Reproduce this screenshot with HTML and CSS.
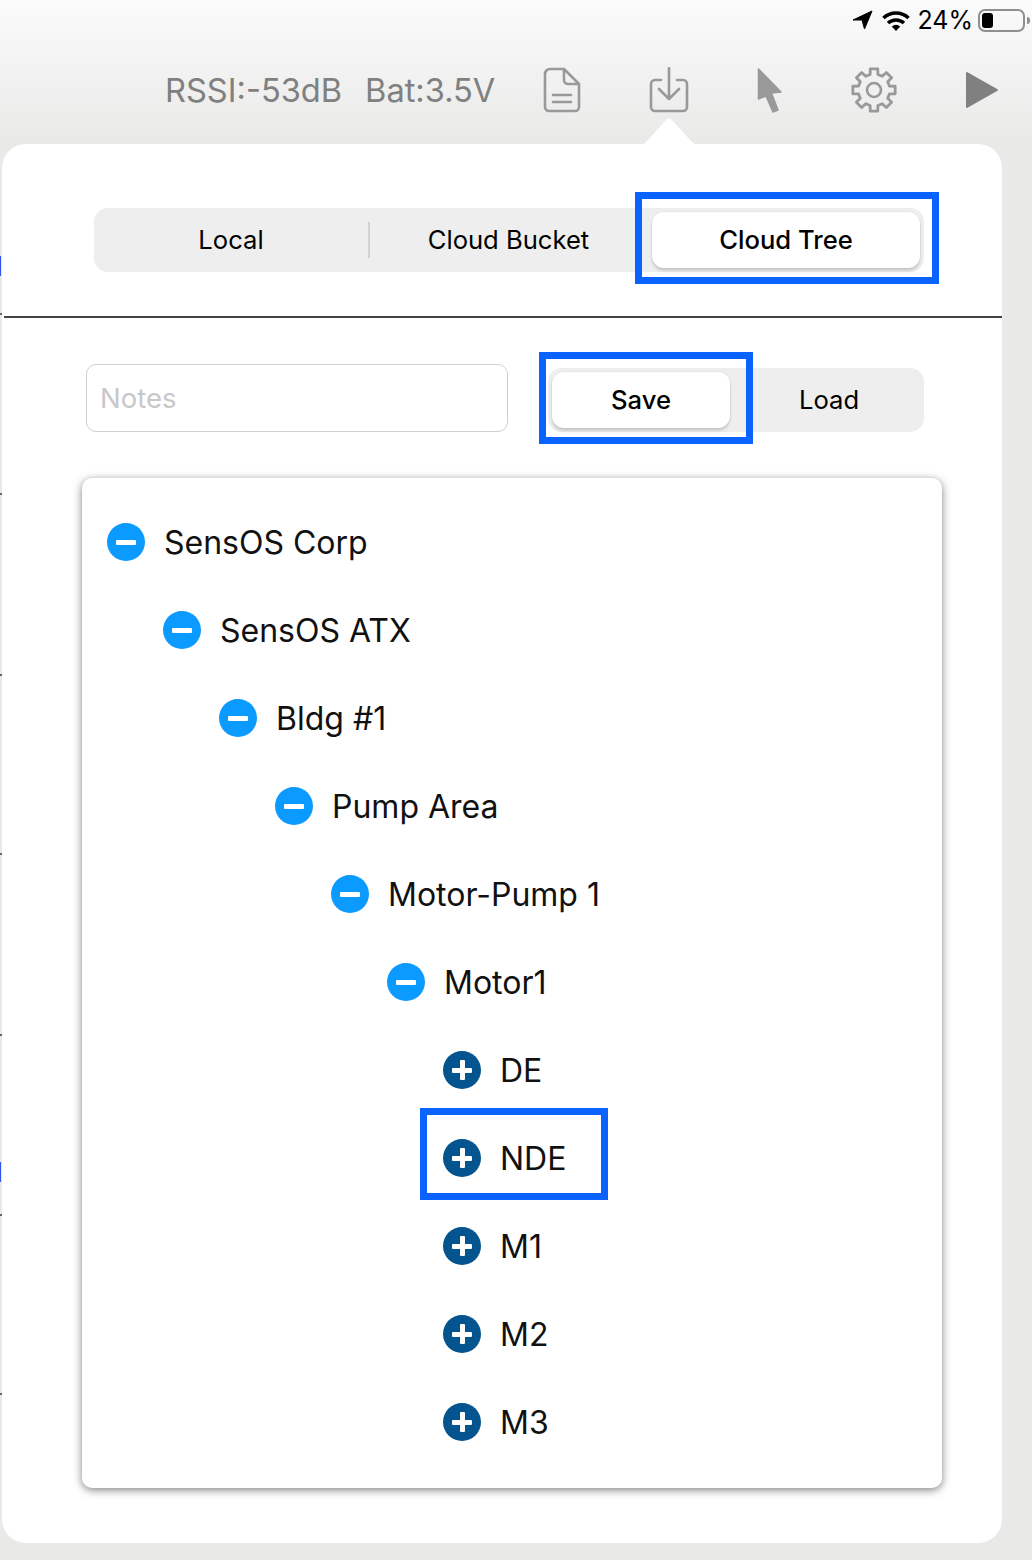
FILE: index.html
```html
<!DOCTYPE html>
<html lang="en">
<head>
<meta charset="utf-8">
<title>Cloud Tree</title>
<link rel="stylesheet" href="styles.css">
</head>
<body>
<div class="edge">
  <i class="tick blue t1"></i><i class="tick t2"></i><i class="tick t3"></i><i class="tick t4"></i><i class="tick t5"></i><i class="tick t6"></i><i class="tick blue t7"></i><i class="tick t8"></i><i class="tick t9"></i>
</div>
<header class="top">
  <div class="status">
    <svg class="st-arrow" width="21" height="20" viewBox="0 0 21 20"><path d="M20 1 1 10h9l2.5 9z" fill="#000" stroke="#000" stroke-width="1" stroke-linejoin="round"/></svg>
    <svg class="st-wifi" width="28" height="21" viewBox="0 0 28 21"><path d="M1.5 8a18 18 0 0 1 25 0M6 13a12 12 0 0 1 16 0" fill="none" stroke="#000" stroke-width="3.6"/><path d="M9.8 16.5a6.5 6.5 0 0 1 8.4 0L14 21z" fill="#000"/></svg>
    <span class="st-pct">24%</span>
    <span class="battery"><span class="level"></span></span><span class="nub"></span>
  </div>
  <div class="tools">
    <span class="read r1">RSSI:-53dB</span>
    <span class="read r2">Bat:3.5V</span>
    <svg class="ic doc" width="38" height="46" viewBox="0 0 38 46"><path d="M7 2h14l15 15v23a4 4 0 0 1-4 4H6a4 4 0 0 1-4-4V7a5 5 0 0 1 5-5zM21 2v11a4 4 0 0 0 4 4h11M10 28h18M10 35h18" fill="none" stroke="#999" stroke-width="2.6" stroke-linejoin="round" stroke-linecap="round"/></svg>
    <svg class="ic dl" width="40" height="46" viewBox="0 0 40 46"><path d="M12 13H6a4 4 0 0 0-4 4v23a4 4 0 0 0 4 4h28a4 4 0 0 0 4-4V17a4 4 0 0 0-4-4h-6M20 1v30M10 22l10 10 10-10" fill="none" stroke="#999" stroke-width="2.6" stroke-linejoin="round" stroke-linecap="round"/></svg>
    <svg class="ic cur" width="26" height="46" viewBox="0 0 26 46"><path d="M1.5 2 24 25l-9.5 1 6.5 17-5 2-7-16-7.5 3z" fill="#999" stroke="#999" stroke-width="1.5" stroke-linejoin="round"/></svg>
    <svg class="ic gear" width="48" height="48" viewBox="0 0 48 48"><path d="M27.87 8.48 27.73 2.83H20.27L20.13 8.48 15.76 10.29 11.67 6.39 6.39 11.67 10.29 15.76 8.48 20.13 2.83 20.27V27.73L8.48 27.87 10.29 32.24 6.39 36.33 11.67 41.61 15.76 37.71 20.13 39.52 20.27 45.17H27.73L27.87 39.52 32.24 37.71 36.33 41.61 41.61 36.33 37.71 32.24 39.52 27.87 45.17 27.73V20.27L39.52 20.13 37.71 15.76 41.61 11.67 36.33 6.39 32.24 10.29z" fill="none" stroke="#999" stroke-width="2.8" stroke-linejoin="round"/><circle cx="24" cy="24" r="7" fill="none" stroke="#999" stroke-width="2.6"/></svg>
    <svg class="ic play" width="34" height="38" viewBox="0 0 34 38"><path d="M2 2v34l30-17z" fill="#808080" stroke="#808080" stroke-width="2" stroke-linejoin="round"/></svg>
  </div>
</header>
<main class="pop">
  <svg class="beak" width="54" height="26" viewBox="0 0 54 26"><path d="M0 26c2 0 3-1 4-2L24 2c2-2 4-2 6 0l20 22c1 1 2 2 4 2z" fill="#fff"/></svg>
  <div class="tabs-row">
    <div class="seg seg-main">
      <div class="tab">Local</div>
      <i class="sep"></i>
      <div class="tab">Cloud Bucket</div>
      <div class="tab on">Cloud Tree</div>
    </div>
    <span class="mark mark-tree"></span>
  </div>
  <div class="rule"></div>
  <div class="form-row">
    <div class="notes">Notes</div>
    <div class="seg seg-small">
      <div class="tab on">Save</div>
      <div class="tab">Load</div>
      <span class="mark mark-save"></span>
    </div>
  </div>
  <section class="tree">
    <div class="row l0"><i class="node minus"></i><span>SensOS Corp</span></div>
    <div class="row l1"><i class="node minus"></i><span>SensOS ATX</span></div>
    <div class="row l2"><i class="node minus"></i><span>Bldg #1</span></div>
    <div class="row l3"><i class="node minus"></i><span>Pump Area</span></div>
    <div class="row l4"><i class="node minus"></i><span>Motor-Pump 1</span></div>
    <div class="row l5"><i class="node minus"></i><span>Motor1</span></div>
    <div class="row l6"><i class="node plus"></i><span>DE</span></div>
    <div class="row l6"><i class="node plus"></i><span>NDE</span><span class="mark mark-nde"></span></div>
    <div class="row l6"><i class="node plus"></i><span>M1</span></div>
    <div class="row l6"><i class="node plus"></i><span>M2</span></div>
    <div class="row l6"><i class="node plus"></i><span>M3</span></div>
  </section>
</main>
</body>
</html>
```
FILE: styles.css
```css
* { box-sizing: border-box; }
html, body { margin: 0; padding: 0; }
body {
  position: relative;
  width: 1032px;
  height: 1560px;
  overflow: hidden;
  background: #e9e9e8;
  font-family: "Inter", "Liberation Sans", sans-serif;
  color: #000;
}
.edge { position: absolute; left: 0; top: 0; width: 2px; height: 1560px; }
.tick { position: absolute; left: 0; width: 2px; height: 2px; background: #666; }
.tick.blue { background: #2f55e6; height: 20px; width: 1px; }
.t1 { top: 256px; }
.t2 { top: 313px; }
.t3 { top: 493px; }
.t4 { top: 674px; }
.t5 { top: 853px; }
.t6 { top: 1034px; }
.t7 { top: 1162px; }
.t8 { top: 1214px; }
.t9 { top: 1393px; }

.top {
  height: 144px;
  background: linear-gradient(#fbfbfb, #e9e9e8);
  display: flex;
  flex-direction: column;
}
.status {
  height: 40px;
  display: flex;
  align-items: center;
  justify-content: flex-end;
  padding-right: 2px;
}
.st-arrow { margin-right: 9px; }
.st-wifi { margin-right: 7px; }
.st-pct { font-size: 25px; margin-right: 5px; }
.battery {
  width: 47px;
  height: 23px;
  border: 2px solid #8f8f8f;
  border-radius: 7px;
  padding: 2px;
  display: flex;
}
.level { width: 11px; background: #000; border-radius: 3px; }
.nub { width: 3px; height: 7px; background: #8f8f8f; border-radius: 0 3px 3px 0; margin-left: 2px; }

.tools {
  display: flex;
  align-items: center;
  height: 52px;
  margin-top: 24px;
  padding-left: 165px;
}
.read { font-size: 32.6px; color: #808080; }
.r2 { margin-left: 23px; }
.ic { flex: none; }
.doc { margin-left: 48px; }
.dl { margin-left: 68px; }
.cur { margin-left: 68px; }
.gear { margin-left: 67px; }
.play { margin-left: 67px; }

.pop {
  position: relative;
  margin-left: 2px;
  width: 1000px;
  height: 1399px;
  background: #fff;
  border-radius: 24px;
  padding-top: 64px;
}
.beak { position: absolute; left: 640px; top: -26px; }

.tabs-row { position: relative; padding-left: 92px; }
.seg {
  position: relative;
  display: flex;
  align-items: stretch;
  height: 64px;
  background: #eeeeee;
  border-radius: 14px;
  padding: 4px;
  font-size: 25.6px;
}
.seg-main { width: 830px; }
.tab { display: flex; align-items: center; justify-content: center; padding-bottom: 2px; }
.seg-main .tab:nth-child(1) { width: 270px; padding-right: 4px; }
.seg-main .tab:nth-child(3) { width: 282px; padding-right: 5px; }
.seg-main .tab.on { width: 268px; padding-right: 0; }
.sep { width: 2px; height: 36px; background: #d2d2d2; align-self: center; flex: none; }
.tab.on {
  background: #fff;
  border-radius: 12px;
  font-weight: 500;
  box-shadow: 0 3px 3px rgba(0, 0, 0, 0.14), 0 0 0 1px rgba(0, 0, 0, 0.03);
}
.rule { height: 2px; background: #444; margin: 44px 0 0 2px; }

.form-row { display: flex; align-items: flex-start; margin: 46px 0 0 84px; }
.notes {
  width: 422px;
  height: 68px;
  border: 1.5px solid #cfcfcf;
  border-radius: 10px;
  padding-left: 13px;
  display: flex;
  align-items: center;
  font-size: 27.5px;
  color: #c8c8c8;
}
.seg-small { width: 376px; margin: 4px 0 0 40px; }
.seg-small .tab.on { width: 178px; }
.seg-small .tab:nth-child(2) { width: 190px; padding-left: 8px; }

.mark {
  position: absolute;
  border: 7px solid #0a62ff;
  pointer-events: none;
}
.mark-tree { left: 633px; top: -16px; width: 304px; height: 92px; }
.mark-save { left: -9px; top: -16px; width: 214px; height: 92px; }

.tree {
  width: 860px;
  height: 1010px;
  margin: 46px 0 0 80px;
  padding-top: 20px;
  background: #fff;
  border-radius: 10px;
  box-shadow: 0 2px 9px rgba(0, 0, 0, 0.5);
}
.row {
  position: relative;
  height: 88px;
  display: flex;
  align-items: center;
  font-family: "Inter", "Liberation Sans", sans-serif;
  font-size: 32px;
  color: #111;
}
.l0 { padding-left: 25px; }
.l1 { padding-left: 81px; }
.l2 { padding-left: 137px; }
.l3 { padding-left: 193px; }
.l4 { padding-left: 249px; }
.l5 { padding-left: 305px; }
.l6 { padding-left: 361px; }
.mark-nde { left: 338px; top: -6px; width: 188px; height: 92px; }
.node {
  position: relative;
  flex: none;
  width: 38px;
  height: 38px;
  border-radius: 50%;
  margin-right: 19px;
}
.minus { background: #0b9aff; }
.plus { background: #03548f; }
.node::before {
  content: "";
  position: absolute;
  left: 9px;
  top: 16.5px;
  width: 20px;
  height: 5px;
  background: #fff;
  border-radius: 1px;
}
.plus::after {
  content: "";
  position: absolute;
  left: 16.5px;
  top: 9px;
  width: 5px;
  height: 20px;
  background: #fff;
  border-radius: 1px;
}
```
